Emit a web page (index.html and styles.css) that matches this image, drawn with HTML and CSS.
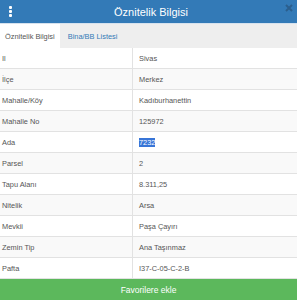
FILE: index.html
```html
<!DOCTYPE html>
<html lang="tr">
<head>
  <meta charset="UTF-8">
  <meta name="viewport" content="width=device-width, initial-scale=1.0">
  <title>Öznitelik Bilgisi</title>
  <link rel="stylesheet" href="styles.css">
</head>
<body>
  <div class="panel">
    <!-- Header -->
    <div class="header">
      <span class="menu"><i></i><i></i><i></i></span>
      <span class="title">Öznitelik Bilgisi</span>
      <svg class="close" width="8" height="8" viewBox="0 0 8 8">
        <path d="M1 1 L7 7 M7 1 L1 7" stroke="#2b5f8e" stroke-width="2"/>
      </svg>
    </div>

    <!-- Tabs -->
    <div class="tabs">
      <span class="tab active">Öznitelik Bilgisi</span>
      <span class="tab">Bina/BB Listesi</span>
    </div>

    <!-- Attribute rows -->
    <div class="rows">
      <div class="row"><span class="label">Il</span><span class="value">Sivas</span></div>
      <div class="row"><span class="label">İlçe</span><span class="value">Merkez</span></div>
      <div class="row"><span class="label">Mahalle/Köy</span><span class="value">Kadıburhanettin</span></div>
      <div class="row"><span class="label">Mahalle No</span><span class="value">125972</span></div>
      <div class="row"><span class="label">Ada</span><span class="value"><span class="selected">7232</span></span></div>
      <div class="row"><span class="label">Parsel</span><span class="value">2</span></div>
      <div class="row"><span class="label">Tapu Alanı</span><span class="value">8.311,25</span></div>
      <div class="row"><span class="label">Nitelik</span><span class="value">Arsa</span></div>
      <div class="row"><span class="label">Mevkii</span><span class="value">Paşa Çayırı</span></div>
      <div class="row"><span class="label">Zemin Tip</span><span class="value">Ana Taşınmaz</span></div>
      <div class="row"><span class="label">Pafta</span><span class="value">I37-C-05-C-2-B</span></div>
    </div>

    <button type="button" class="fav">Favorilere ekle</button>
  </div>
</body>
</html>
```

FILE: styles.css
```css
body {
  margin: 0;
  font-family: "Liberation Sans", Arial, sans-serif;
  color: #555;
  background: #fff;
}
.panel {
  width: 297px;
  height: 300px;
  display: flex;
  flex-direction: column;
  overflow: hidden;
}
.header {
  height: 23px;
  background-color: #337ab7;
  border-bottom: 1px solid #d6e2ee;
  display: flex;
  align-items: center;
  justify-content: space-between;
  padding: 0 4px 0 9px;
}
.menu {
  display: flex;
  flex-direction: column;
  gap: 1.5px;
  width: 12px;
}
.menu i {
  width: 2.5px;
  height: 2.5px;
  background: #fff;
  border-radius: 1px;
}
.title {
  color: #fff;
  font-size: 11px;
}
.close {
  margin: -8px 0 0 4px;
}
.tabs {
  height: 24px;
  background-color: #eee;
  display: flex;
  font-size: 7.4px;
}
.tab {
  display: flex;
  align-items: center;
  padding: 0 8px;
  color: #337ab7;
  white-space: nowrap;
}
.tab.active {
  background: #fff;
  color: #555;
  padding: 0 5px;
}
.rows {
  flex: 1;
  font-size: 7.4px;
}
.row {
  display: grid;
  grid-template-columns: 133px 1fr;
  height: 20px;
  border-bottom: 1px solid #e2e2e2;
}
.row:nth-child(even) {
  background-color: #f9f9f9;
}
.label {
  display: flex;
  align-items: center;
  padding-left: 2px;
  border-right: 1px solid #e2e2e2;
}
.value {
  display: flex;
  align-items: center;
  padding-left: 6px;
}
.selected {
  background-color: #3875d7;
  color: #fff;
}
.fav {
  height: 21px;
  width: 100%;
  border: none;
  margin: 0;
  background-color: #5cb85c;
  color: #fff;
  font-family: "Liberation Sans", Arial, sans-serif;
  font-size: 8.5px;
  padding: 0;
}
```
